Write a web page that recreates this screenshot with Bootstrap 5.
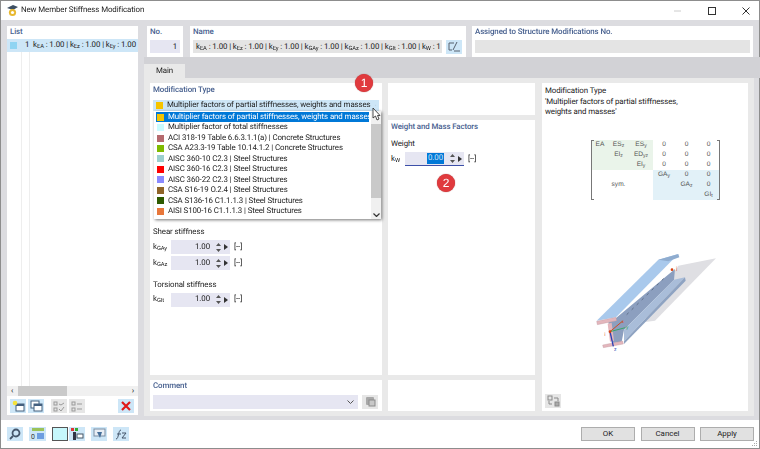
<!DOCTYPE html>
<html lang="en"><head><meta charset="utf-8"><title>New Member Stiffness Modification</title>
<link href="https://cdn.jsdelivr.net/npm/bootstrap@5.3.0/dist/css/bootstrap.min.css" rel="stylesheet">
<style>
html,body{margin:0;width:760px;height:449px;overflow:hidden;background:#fff}
body{font-family:Roboto,"Noto Sans",sans-serif;font-size:7.9px;letter-spacing:-.1px;line-height:10.5px;color:#222;text-rendering:geometricPrecision}
sub{font-size:5.8px;bottom:-.2em;line-height:0}
.win{width:760px;height:449px;border:1px solid #8d8d8d;position:relative;display:flex;flex-direction:column;filter:blur(.3px)}
.ttl{height:19px;padding-left:5px;font-size:7.9px;gap:2px;flex:none}
.ctl{margin-left:auto;gap:26px;padding-right:9px}
.area{height:400px;flex:none;background:#dcdce0;padding:6px 0 0 6px;gap:6px}
.lst{width:131px;height:389px;background:#fff;display:flex;flex-direction:column}
.hd{color:#47608f;font-weight:500;height:13px;padding:1px 3px 0}
.hdb{color:#47608f;font-weight:500}
.sel{height:13px;background:#cde6f7;padding:0 0 0 3px;white-space:nowrap;overflow:hidden;flex:none}
.tree{flex:1;margin-left:14px;border-left:1px solid #eee;padding-left:7px}
.tree>div{border-left:1px solid #eee;height:100%}
.sw{width:7px;height:7px;flex:none;display:block}
.hsb{height:10px;background:#f0f0f0;padding:0 4px;font-size:8px;flex:none}
.thumb{width:49px;height:10px;background:#c9c9c9;margin-left:5px}
.tools{height:19px;padding:3px 3px 2px;gap:2px;flex:none}
.ib{width:16px;height:14px;background:#cde6f7;flex:none;display:flex;align-items:center;justify-content:center;padding:0;border:0;border-radius:0}
.ib.off{background:#e6e6e6}
.gapl{margin-left:5px}
.rc{width:615px;display:flex;flex-direction:column}
.top{height:31px;gap:7px;flex:none;margin-right:5px;margin-left:3px}
.pn{background:#fff;padding:1px 3px 0}
.p1{width:36px}.p2{width:276px}.p3{width:281px;margin-left:-1px}
.fld{height:13px;margin-top:2px;line-height:13px;padding:0 3px;white-space:nowrap;overflow:hidden;background:#e4e4e4}
.fb{background:#e6e6f2}
.tabs{height:21px;flex:none;background:#d2d2d6;padding:7px 0 0 0;border:0;margin:0 -6px 0 0}
.tabs .nav-link{width:41px;height:14px;padding:0;background:#e9e9e9;color:#222;border:0;border-radius:0;text-align:center;line-height:14px;font-size:7.9px}
.mainp{height:338px;background:#e9e9e9;padding:5px 6px;gap:6px;flex:none;width:610px}
.c1{width:232px;gap:5px}.c2{width:147px;gap:5px}.c3{width:206px;margin-left:1px;padding:3px;position:relative}
.cw{background:#fff}
.modp{height:292px;padding:2px 3px}
.cmb{height:11px;background:#cde6f7;margin-top:4px;padding:0 3px;gap:4px;width:226px;white-space:nowrap}
.rowk{height:14px;margin-bottom:2px}
.kl{width:18px;flex:none}
.klw{width:14px;flex:none}
.spin{width:59px;height:14px;background:#e6e6f2;justify-content:flex-end;flex:none}
.ar{width:20px;flex:none;display:flex;align-items:center;gap:3px;padding-left:5.5px}
.unit{margin-left:4px}
.lbl{margin-bottom:3px}
.drop{position:absolute;left:153px;top:110px;width:227px;height:108px;background:#fff;box-shadow:1px 1px 3px rgba(0,0,0,.55);z-index:5;padding:1px 0 0 2px;display:flex;flex-direction:column;overflow:hidden}
.drop .it{height:10.45px;width:213px;padding-left:1px;gap:4px;white-space:nowrap;line-height:10.4px;flex:none}
.drop .on{background:#0078d7;color:#fff}
.vsb{position:absolute;right:0;top:0;bottom:0;width:10px;background:#f0f0f0}
.vth{position:absolute;left:0;right:0;top:13px;height:74px;background:#c9c9c9}
.bdg{position:absolute;width:18px;height:18px;border-radius:50%;background:#e03a3e;color:#fff;font-size:12px;letter-spacing:0;line-height:18px;text-align:center;z-index:7;font-family:"Liberation Sans",sans-serif;box-shadow:0 0 1px #933}
.wt{height:255px;padding:2px 3px}
.selv{background:#0078d7;color:#cfe4f7;padding:0 1px}
.under{border-bottom:1px solid #3c4fa8}
.mx{display:grid;grid-template-columns:16px 21px 24px 22px 23px 21px;grid-auto-rows:10px;width:129px;margin:22px 0 0 46px;font-family:"Liberation Sans",sans-serif;font-size:6.6px;letter-spacing:0;color:#555;text-align:center;line-height:10px;position:relative;border-left:1px solid #777;border-right:1px solid #777}
.mx::before,.mx::after{content:"";position:absolute;top:0;bottom:0;width:2px;border-top:1px solid #777;border-bottom:1px solid #777}
.mx::before{left:0}.mx::after{right:0}
.mx i{font-style:normal}.mg{background:#eaf4ea}.mb{background:#e2f1f8}
.mx sub{font-size:5px}
.cbottom{height:31px;padding:1px 3px}
.combo2{height:14px;background:#e6e6f2;width:205px;justify-content:flex-end;padding-right:4px}
.foot{flex:1;background:#fff;gap:6px;padding:7px 0 0 6px;position:relative}
.fbtn{width:54px;height:14px;background:#e1e1e1;border:1px solid #adadad;border-radius:0;font-size:7.9px;line-height:12px;padding:0;color:#222}
.fbtn:hover{background:#e1e1e1}
.acts{position:absolute;right:5px;top:7px;gap:5.500px}
.grip{position:absolute;right:1px;bottom:1px}
</style></head><body>
<div class="win">
 <div class="ttl d-flex align-items-center">
  <svg width="13" height="13" viewBox="0 0 13 13"><path d="M1 4 7 1l5 2-5 3z" fill="#3d4f63"/><circle cx="6.5" cy="8.5" r="3.6" fill="#e8b830"/><circle cx="6.5" cy="8.5" r="1.6" fill="#fff"/></svg>
  <span>New Member Stiffness Modification</span>
  <div class="ctl d-flex align-items-center">
   <svg width="8" height="8" viewBox="0 0 8 8"><path d="M0 4h7" stroke="#ccc"/></svg>
   <svg width="8" height="8" viewBox="0 0 8 8"><rect x=".5" y=".5" width="7" height="7" fill="none" stroke="#333"/></svg>
   <svg width="8" height="8" viewBox="0 0 8 8"><path d="M.5.5l7 7M7.5.5l-7 7" stroke="#333"/></svg>
  </div>
 </div>
 <div class="area d-flex">
  <div class="lst">
   <div class="hd">List</div>
   <div class="sel d-flex align-items-center"><span class="sw" style="background:#8fd4f2"></span><span class="ms-2">1&nbsp; k<sub>EA</sub> : 1.00 | k<sub>Ez</sub> : 1.00 | k<sub>Ey</sub> : 1.00</span></div>
   <div class="tree"><div></div></div>
   <div class="hsb d-flex align-items-center"><span>‹</span><div class="thumb"></div><span class="ms-auto">›</span></div>
   <div class="tools d-flex">
    <button class="ib"><svg width="13" height="12" viewBox="0 0 13 12"><rect x="4" y="4" width="8" height="7" fill="#fff" stroke="#45607f"/><rect x="4" y="4" width="8" height="2" fill="#45607f"/><circle cx="3" cy="3" r="2.3" fill="#f5e23a"/></svg></button>
    <button class="ib"><svg width="13" height="12" viewBox="0 0 13 12"><rect x="1" y="1" width="8" height="7" fill="#fff" stroke="#45607f"/><rect x="4" y="4" width="8" height="7" fill="#fff" stroke="#45607f"/><rect x="4" y="4" width="8" height="2" fill="#45607f"/></svg></button>
    <button class="ib off gapl"><svg width="12" height="11" viewBox="0 0 12 11" fill="none" stroke="#9a9a9a"><rect x="1" y="1" width="3" height="3"/><rect x="1" y="7" width="3" height="3"/><path d="M6 8l2 2 3-4M6 3l2 1 3-2"/></svg></button>
    <button class="ib off"><svg width="12" height="11" viewBox="0 0 12 11" fill="none" stroke="#9a9a9a"><rect x="1" y="1" width="3" height="3"/><rect x="1" y="7" width="3" height="3"/><path d="M6 3h5M6 8h5"/></svg></button>
    <button class="ib ms-auto" style="margin-right:1px"><svg width="10" height="10" viewBox="0 0 10 10"><path d="M1 1l8 8M9 1l-8 8" stroke="#e01818" stroke-width="2.2"/></svg></button>
   </div>
  </div>
  <div class="rc">
   <div class="top d-flex">
    <div class="pn p1"><div class="hdb">No.</div><div class="fld fb text-end">1</div></div>
    <div class="pn p2"><div class="hdb">Name</div><div class="d-flex gap-1"><div class="fld flex-grow-1" style="width:250px">k<sub>EA</sub> : 1.00 | k<sub>Ez</sub> : 1.00 | k<sub>Ey</sub> : 1.00 | k<sub>GAy</sub> : 1.00 | k<sub>GAz</sub> : 1.00 | k<sub>GIt</sub> : 1.00 | k<sub>W</sub> : 1</div><button class="ib" style="margin-top:2px;margin-right:1px"><svg width="13" height="11" viewBox="0 0 13 11" fill="none" stroke="#56606e"><path d="M1 2h5M1 2v7h3M5 9l4-8M6 10h6"/></svg></button></div></div>
    <div class="pn p3"><div class="hdb">Assigned to Structure Modifications No.</div><div class="fld"></div></div>
   </div>
   <ul class="nav tabs"><li class="nav-item"><a class="nav-link active" href="#">Main</a></li></ul>
   <div class="mainp d-flex">
    <div class="c1 d-flex flex-column">
     <div class="cw modp">
      <div class="hdb">Modification Type</div>
      <div class="cmb d-flex align-items-center"><span class="sw" style="background:#f6c400"></span><span>Multiplier factors of partial stiffnesses, weights and masses</span><svg class="ms-auto" width="7" height="4" viewBox="0 0 7 4"><path d="M.5.500l3 3 3-3" fill="none" stroke="#555"/></svg></div>
      <div style="height:116px"></div>
      <div class="lbl">Shear stiffness</div>
      <div class="rowk d-flex align-items-center"><span class="kl">k<sub>GAy</sub></span><div class="spin d-flex align-items-center">1.00<span class="ar"><svg width="5" height="9" viewBox="0 0 5 9"><path d="M0 3l2.500-3 2.500 3zM0 6l2.500 3 2.500-3z" fill="#555"/></svg><svg width="4" height="6" viewBox="0 0 4 6"><path d="M0 0l4 3-4 3z" fill="#333"/></svg></span></div><span class="unit">[--]</span></div>
      <div class="rowk d-flex align-items-center"><span class="kl">k<sub>GAz</sub></span><div class="spin d-flex align-items-center">1.00<span class="ar"><svg width="5" height="9" viewBox="0 0 5 9"><path d="M0 3l2.500-3 2.500 3zM0 6l2.500 3 2.500-3z" fill="#555"/></svg><svg width="4" height="6" viewBox="0 0 4 6"><path d="M0 0l4 3-4 3z" fill="#333"/></svg></span></div><span class="unit">[--]</span></div>
      <div class="lbl" style="margin-top:10px;margin-bottom:2px">Torsional stiffness</div>
      <div class="rowk d-flex align-items-center"><span class="kl">k<sub>GIt</sub></span><div class="spin d-flex align-items-center">1.00<span class="ar"><svg width="5" height="9" viewBox="0 0 5 9"><path d="M0 3l2.500-3 2.500 3zM0 6l2.500 3 2.500-3z" fill="#555"/></svg><svg width="4" height="6" viewBox="0 0 4 6"><path d="M0 0l4 3-4 3z" fill="#333"/></svg></span></div><span class="unit">[--]</span></div>
     </div>
     <div class="cw cbottom">
      <div class="hdb" style="margin-bottom:3px">Comment</div>
      <div class="d-flex gap-1"><div class="combo2 d-flex align-items-center"><svg width="7" height="4" viewBox="0 0 7 4"><path d="M.5.500l3 3 3-3" fill="none" stroke="#555"/></svg></div><button class="ib off"><svg width="11" height="11" viewBox="0 0 11 11"><rect x="1" y="1" width="8" height="8" rx="1" fill="#a8a8a8"/><rect x="4" y="4" width="6" height="6" fill="#c8c8c8" stroke="#8a8a8a"/></svg></button></div>
     </div>
    </div>
    <div class="c2 d-flex flex-column">
     <div class="cw" style="height:32px"></div>
     <div class="cw wt">
      <div class="hdb" style="margin-bottom:6px">Weight and Mass Factors</div>
      <div class="lbl" style="margin-bottom:3px">Weight</div>
      <div class="rowk d-flex align-items-center"><span class="klw">k<sub>W</sub></span><div class="spin under d-flex align-items-center"><span class="selv">0.00</span><span class="ar"><svg width="5" height="9" viewBox="0 0 5 9"><path d="M0 3l2.500-3 2.500 3zM0 6l2.500 3 2.500-3z" fill="#555"/></svg><svg width="4" height="6" viewBox="0 0 4 6"><path d="M0 0l4 3-4 3z" fill="#333"/></svg></span></div><span class="unit">[--]</span></div>
     </div>
     <div class="cw flex-grow-1"></div>
    </div>
    <div class="c3 cw">
     <div>Modification Type<br>'Multiplier factors of partial stiffnesses,<br>weights and masses'</div>
     <div class="mx">
      <i class="mg">EA</i><i class="mg">ES<sub>z</sub></i><i class="mg">ES<sub>y</sub></i><i>0</i><i>0</i><i>0</i>
      <i class="mg"></i><i class="mg">EI<sub>z</sub></i><i class="mg">ED<sub>yz</sub></i><i>0</i><i>0</i><i>0</i>
      <i class="mg"></i><i class="mg"></i><i class="mg">EI<sub>y</sub></i><i>0</i><i>0</i><i>0</i>
      <i></i><i></i><i></i><i class="mb">GA<sub>y</sub></i><i class="mb">0</i><i class="mb">0</i>
      <i></i><i>sym.</i><i></i><i class="mb"></i><i class="mb">GA<sub>z</sub></i><i class="mb">0</i>
      <i></i><i></i><i></i><i class="mb"></i><i class="mb"></i><i class="mb">GI<sub>t</sub></i>
     </div>
     <svg width="190" height="150" viewBox="0 0 570 450" style="display:block;margin:19px 0 0 5px">
      <polygon points="385,140 498,118 315,305 280,310" fill="#dfdfe3"/>
      <polygon points="198,297 375,150 372,182 222,332 215,368 190,372 175,310" fill="#8c9fbf"/>
      <polygon points="222,332 372,182 405,175 222,366" fill="#a9bdd9"/>
      <polygon points="222,366 405,175 407,185 222,375" fill="#8ea3c2"/>
      <polygon points="140,305 325,122 385,105 198,295" fill="#a9c9ec"/>
      <polygon points="325,122 385,105 388,115 355,127" fill="#8faccf"/>
      <polygon points="140,307 198,295 200,305 142,317" fill="#e3b6bc" stroke="#b9929a"/>
      <polygon points="173,314 185,311 192,365 180,368" fill="#e3b6bc"/>
      <polygon points="158,378 218,366 220,375 160,386" fill="#e3b6bc" stroke="#b9929a"/>
      <path d="M230 287 350 170" stroke="#5e6e88" stroke-width="3" stroke-dasharray="8 13"/>
      <path d="M180 338 218 306" stroke="#d2491e" stroke-width="3"/><path d="M180 338 226 326" stroke="#3aa56a" stroke-width="3"/><path d="M180 338 190 382" stroke="#2c3fb5" stroke-width="4"/>
      <circle cx="180" cy="338" r="4" fill="#d8400f"/><circle cx="366" cy="152" r="4" fill="#d8400f"/>
      <text x="163" y="352" font-size="16" fill="#d66a3a">i</text><text x="378" y="154" font-size="16" fill="#d66a3a">j</text><text x="228" y="329" font-size="15" fill="#3aa56a">y</text><text x="192" y="397" font-size="15" fill="#2c3fb5">z</text><text x="215" y="311" font-size="13" fill="#d2491e">x</text>
     </svg>
     <button class="ib off" style="position:absolute;left:3px;bottom:3px"><svg width="13" height="12" viewBox="0 0 13 12" fill="none" stroke="#8a8a8a"><rect x="1" y="1" width="4" height="4"/><rect x="8" y="7" width="4" height="4" fill="#aaa"/><path d="M7 3h4v3M5 9H2V6"/></svg></button>
    </div>
   </div>
  </div>
 </div>
 <div class="foot d-flex align-items-start">
  <button class="ib"><svg width="12" height="12" viewBox="0 0 12 12" fill="none" stroke="#45566b" stroke-width="1.800"><circle cx="7" cy="5" r="3.500"/><path d="M4 8 1 11"/></svg></button>
  <button class="ib" style="width:17px"><svg width="14" height="12" viewBox="0 0 14 12"><rect x="1" y="0" width="12" height="3" fill="#9ac25a"/><rect x="6" y="5" width="7" height="6" fill="#6d9de0"/><text x="0" y="11" font-size="7" fill="#333">0</text></svg></button>
  <div class="ib" style="background:#c6f7fb;border:1px solid #555"></div>
  <button class="ib" style="margin-left:-5px"><svg width="14" height="13" viewBox="0 0 14 13"><rect x="1" y="0" width="3" height="3" fill="#d33"/><rect x="5" y="0" width="3" height="3" fill="#3a3"/><rect x="3" y="4" width="3" height="8" fill="#334"/><rect x="7" y="6" width="6" height="4" fill="#fff" stroke="#456"/></svg></button>
  <button class="ib"><svg width="13" height="12" viewBox="0 0 13 12"><rect x="1" y="1" width="11" height="7" fill="#e8eef5" stroke="#7a8da3"/><path d="M4 4h5l-2 6z" fill="#456f9a"/></svg></button>
  <button class="ib"><svg width="14" height="12" viewBox="0 0 14 12" fill="none" stroke="#44546a"><path d="M2 11c3 0 2-9 5-9M3 6h4M8 5h4l-4 5h4"/></svg></button>
  <div class="acts d-flex">
   <button class="btn fbtn">OK</button><button class="btn fbtn">Cancel</button><button class="btn fbtn">Apply</button>
  </div>
  <svg class="grip" width="6" height="6" viewBox="0 0 6 6" fill="#aaa"><rect x="4" y="0" width="1" height="1"/><rect x="2" y="2" width="1" height="1"/><rect x="4" y="2" width="1" height="1"/><rect x="0" y="4" width="1" height="1"/><rect x="2" y="4" width="1" height="1"/><rect x="4" y="4" width="1" height="1"/></svg>
 </div>
 <div class="drop">
  <div class="it on d-flex align-items-center"><span class="sw" style="background:#f6c400"></span><span>Multiplier factors of partial stiffnesses, weights and masses</span></div>
  <div class="it d-flex align-items-center"><span class="sw" style="background:#c9fbff"></span><span>Multiplier factor of total stiffnesses</span></div>
  <div class="it d-flex align-items-center"><span class="sw" style="background:#b56a6e"></span><span>ACI 318-19 Table 6.6.3.1.1(a) | Concrete Structures</span></div>
  <div class="it d-flex align-items-center"><span class="sw" style="background:#7fba00"></span><span>CSA A23.3-19 Table 10.14.1.2 | Concrete Structures</span></div>
  <div class="it d-flex align-items-center"><span class="sw" style="background:#9bcfcf"></span><span>AISC 360-10 C2.3 | Steel Structures</span></div>
  <div class="it d-flex align-items-center"><span class="sw" style="background:#ff0000"></span><span>AISC 360-16 C2.3 | Steel Structures</span></div>
  <div class="it d-flex align-items-center"><span class="sw" style="background:#8a8aff"></span><span>AISC 360-22 C2.3 | Steel Structures</span></div>
  <div class="it d-flex align-items-center"><span class="sw" style="background:#8f6428"></span><span>CSA S16-19 O.2.4 | Steel Structures</span></div>
  <div class="it d-flex align-items-center"><span class="sw" style="background:#2e5a00"></span><span>CSA S136-16 C1.1.1.3 | Steel Structures</span></div>
  <div class="it d-flex align-items-center"><span class="sw" style="background:#e8773a"></span><span>AISI S100-16 C1.1.1.3 | Steel Structures</span></div>
  <div class="vsb"><div class="vth"></div><svg style="position:absolute;left:2px;bottom:2px" width="7" height="4" viewBox="0 0 7 4"><path d="M.5.500l3 3 3-3" fill="none" stroke="#333" stroke-width="1.200"/></svg></div>
 </div>
 <div class="bdg" style="left:354px;top:73px">1</div>
 <div class="bdg" style="left:436px;top:173px">2</div>
 <svg style="position:absolute;left:371px;top:106px;z-index:8" width="9" height="14" viewBox="0 0 9 14"><path d="M1 1v10l2.500-2 1.500 4 2-1-1.500-3.500H8z" fill="#fff" stroke="#222" stroke-width=".8"/></svg>
</div>
</body></html>
